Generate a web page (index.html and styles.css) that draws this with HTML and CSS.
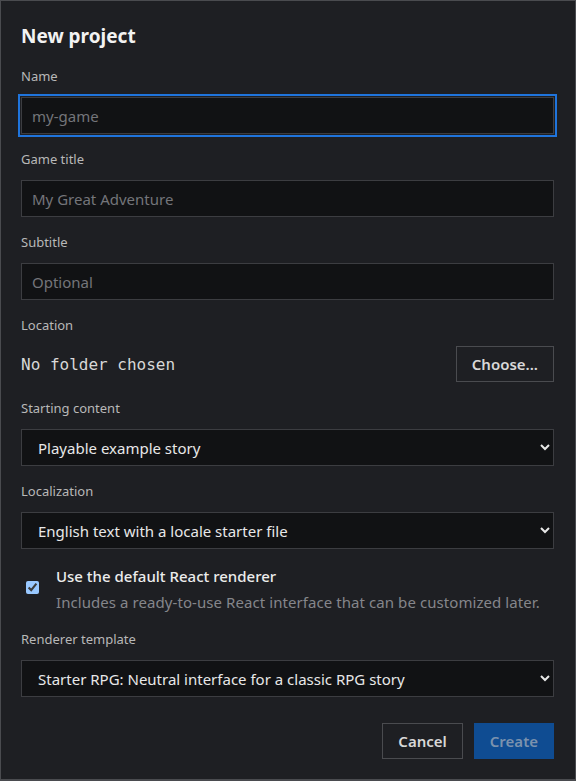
FILE: index.html
```html
<!DOCTYPE html>
<html lang="en">

<head>
    <meta charset="UTF-8" />
    <meta name="viewport" content="width=device-width, initial-scale=1.0" />
    <title>New project</title>
    <link rel="stylesheet" href="styles.css">
</head>

<body>
    <form class="dialog">
        <h1 class="title">New project</h1>

        <div class="field">
            <label class="label" for="name">Name</label>
            <input class="input is-focus" id="name" type="text" placeholder="my-game" />
        </div>

        <div class="field">
            <label class="label" for="game-title">Game title</label>
            <input class="input" id="game-title" type="text" placeholder="My Great Adventure" />
        </div>

        <div class="field">
            <label class="label" for="subtitle">Subtitle</label>
            <input class="input" id="subtitle" type="text" placeholder="Optional" />
        </div>

        <div class="field">
            <span class="label">Location</span>
            <div class="location">
                <span class="path">No folder chosen</span>
                <button class="btn" type="button">Choose...</button>
            </div>
        </div>

        <div class="field">
            <label class="label" for="starting">Starting content</label>
            <select class="select" id="starting">
                <option>Playable example story</option>
                <option>Empty project</option>
            </select>
        </div>

        <div class="field">
            <label class="label" for="locale">Localization</label>
            <select class="select" id="locale">
                <option>English text with a locale starter file</option>
                <option>English only</option>
            </select>
        </div>

        <label class="check">
            <input class="check-box" type="checkbox" checked />
            <span class="check-text">
                <span class="check-title">Use the default React renderer</span>
                <span class="check-desc">Includes a ready-to-use React interface that can be customized later.</span>
            </span>
        </label>

        <div class="field">
            <label class="label" for="template">Renderer template</label>
            <select class="select" id="template">
                <option>Starter RPG: Neutral interface for a classic RPG story</option>
            </select>
        </div>

        <div class="actions">
            <button class="btn" type="button">Cancel</button>
            <button class="btn btn-primary" type="submit" disabled>Create</button>
        </div>
    </form>
</body>

</html>
```

FILE: styles.css
```css
* {
    margin: 0;
    padding: 0;
    box-sizing: border-box;
}

html {
    color-scheme: dark;
}

body {
    background: #1e1f23;
    font-family: "Noto Sans", "Liberation Sans", sans-serif;
    color: #e6e6e6;
}

.dialog {
    width: 576px;
    height: 781px;
    border: 1px solid #4a4b4f;
    border-bottom-width: 2px;
    background: #1e1f23;
    padding: 22px 21px 0 20px;
    display: flex;
    flex-direction: column;
}

.title {
    font-size: 19px;
    font-weight: 700;
    line-height: 26px;
    color: #f2f2f2;
    margin-bottom: 19px;
}

.field {
    display: flex;
    flex-direction: column;
    margin-bottom: 17px;
}

.label {
    font-size: 13px;
    line-height: 16px;
    color: #b8b8b8;
    margin-bottom: 13px;
}

.input,
.select {
    width: 100%;
    height: 37px;
    background: #111214;
    border: 1px solid #3c3d41;
    border-radius: 0;
    color: #e8e8e8;
    font: 15px "Noto Sans", "Liberation Sans", sans-serif;
    outline: none;
}

.input {
    padding: 0 10px;
}

.input::placeholder {
    color: #74757a;
}

.input.is-focus {
    outline: 2px solid #1f74dc;
    outline-offset: 1px;
}

.select {
    padding: 0 10px 0 12px;
    font-size: 15px;
}

.location {
    display: flex;
    align-items: center;
    justify-content: space-between;
    height: 36px;
    margin-bottom: 1px;
}

.path {
    font: 16px "DejaVu Sans Mono", "Liberation Mono", monospace;
    color: #d8d8d8;
}

.btn {
    height: 36px;
    padding: 0 15px;
    background: #1e1f23;
    border: 1px solid #4a4b4f;
    color: #d8d8d8;
    font: 600 15px "Noto Sans", "Liberation Sans", sans-serif;
    cursor: pointer;
}

.btn-primary {
    background: #0f4c92;
    border-color: #0f4c92;
    color: #7b92ae;
}

.check {
    display: flex;
    align-items: flex-start;
    gap: 17px;
    padding-left: 5px;
    margin-bottom: 16px;
}

.check-box {
    width: 13px;
    height: 13px;
    margin-top: 15px;
}

.check-text {
    display: flex;
    flex-direction: column;
}

.check-title {
    font-size: 15px;
    font-weight: 500;
    line-height: 20px;
    color: #ececec;
}

.check-desc {
    font-size: 15px;
    line-height: 26px;
    margin-top: 3px;
    color: #85868b;
    letter-spacing: 0.07px;
}

.actions {
    display: flex;
    justify-content: flex-end;
    gap: 11px;
    margin-top: 9px;
}
```
